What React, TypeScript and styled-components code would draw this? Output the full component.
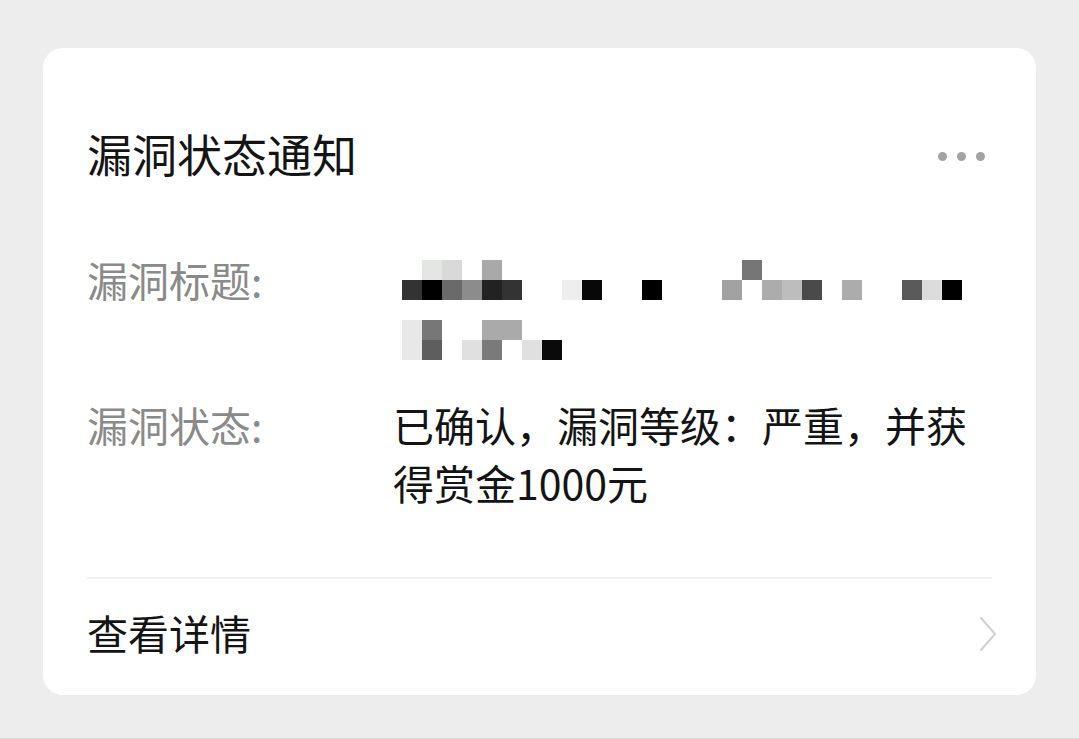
import React from "react";
import styled, { createGlobalStyle } from "styled-components";

const GlobalStyle = createGlobalStyle`
  html, body {
    margin: 0;
    padding: 0;
    background: #ededed;
  }
  body {
    font-family: "Noto Sans CJK SC", "Noto Sans", sans-serif;
  }
  * { box-sizing: border-box; }
`;

const Page = styled.div`
  min-height: 739px;
  background: #ededed;
  padding: 48px 43px 0 43px;
  border-bottom: 1px solid #d9d9d9;
`;

const Card = styled.div`
  width: 993px;
  height: 647px;
  background: #ffffff;
  border-radius: 20px;
  padding: 76px 44px 0 44px;
  display: flex;
  flex-direction: column;
`;

const Header = styled.div`
  display: flex;
  align-items: center;
  justify-content: space-between;
  height: 60px;
`;

const Title = styled.div`
  font-size: 45px;
  line-height: 60px;
  color: #141414;
  font-weight: 400;
`;

const Dots = styled.div`
  display: flex;
  gap: 10px;
  margin-right: 7px;
  margin-top: 4px;
`;

const Dot = styled.span`
  width: 9px;
  height: 9px;
  border-radius: 50%;
  background: #a3a3a3;
`;

const Fields = styled.div`
  display: flex;
  flex-direction: column;
  gap: 29px;
  margin-top: 66px;
`;

const Field = styled.div`
  display: grid;
  grid-template-columns: 306px 1fr;
  font-size: 41px;
  line-height: 58px;
`;

const Label = styled.div`
  color: #8a8a8a;
`;

const Value = styled.div`
  color: #141414;
`;

const MosaicLine = styled.div<{ $offset: number }>`
  height: 58px;
  padding-top: ${(p) => p.$offset}px;
  margin-left: 9px;
`;

const MosaicGrid = styled.div`
  display: grid;
  grid-template-columns: repeat(28, 20px);
  grid-template-rows: repeat(2, 20px);
`;

const Cell = styled.span<{ $c: string }>`
  background: ${(p) => p.$c};
`;

const Divider = styled.div`
  height: 2px;
  background: #f0f0f0;
  margin-top: 66px;
`;

const Footer = styled.div`
  display: flex;
  align-items: center;
  justify-content: space-between;
  padding-top: 24px;
`;

const FooterText = styled.div`
  font-size: 41px;
  line-height: 58px;
  color: #141414;
`;

const Chevron = styled.svg`
  width: 20px;
  height: 36px;
  margin-right: -6px;
  margin-top: 4px;
  display: block;
`;

type Row = Record<number, string>;

const line1Top: Row = { 1: "#e3e6e3", 2: "#d9d9d9", 4: "#a9a9a9", 17: "#767676" };
const line1Main: Row = {
  0: "#333333", 1: "#000000", 2: "#6a6a6a", 3: "#8c8c8c", 4: "#222222", 5: "#333333",
  8: "#eeeeee", 9: "#080808", 12: "#000000", 16: "#a2a2a2", 18: "#acacac",
  19: "#bdbdbd", 20: "#4a4a4a", 22: "#acacac", 25: "#5a5a5a", 26: "#dcdcdc", 27: "#000000",
};
const line2Top: Row = { 0: "#e8e8e8", 1: "#777777", 4: "#aaaaaa", 5: "#aaaaaa" };
const line2Main: Row = {
  0: "#e8e8e8", 1: "#5e5e5e", 3: "#e0e0e0", 4: "#7a7a7a", 6: "#e0e0e0", 7: "#0a0a0a",
};

const Mosaic: React.FC<{ top: Row; main: Row; offset: number }> = ({ top, main, offset }) => (
  <MosaicLine $offset={offset}>
    <MosaicGrid>
      {[top, main].flatMap((row, r) =>
        Array.from({ length: 28 }, (_, i) => (
          <Cell key={`${r}-${i}`} $c={row[i] || "transparent"} />
        ))
      )}
    </MosaicGrid>
  </MosaicLine>
);

export default function App() {
  return (
    <>
      <GlobalStyle />
      <Page>
        <Card>
          <Header>
            <Title>漏洞状态通知</Title>
            <Dots>
              <Dot />
              <Dot />
              <Dot />
            </Dots>
          </Header>
          <Fields>
            <Field>
              <Label>漏洞标题:</Label>
              <Value>
                <Mosaic top={line1Top} main={line1Main} offset={10} />
                <Mosaic top={line2Top} main={line2Main} offset={12} />
              </Value>
            </Field>
            <Field>
              <Label>漏洞状态:</Label>
              <Value>
                已确认，漏洞等级：严重，并获
                <br />
                得赏金1000元
              </Value>
            </Field>
          </Fields>
          <Divider />
          <Footer>
            <FooterText>查看详情</FooterText>
            <Chevron viewBox="0 0 20 36">
              <polyline
                points="3,2 17,18 3,34"
                fill="none"
                stroke="#d2d2d2"
                strokeWidth="2.2"
                strokeLinecap="round"
                strokeLinejoin="round"
              />
            </Chevron>
          </Footer>
        </Card>
      </Page>
    </>
  );
}
